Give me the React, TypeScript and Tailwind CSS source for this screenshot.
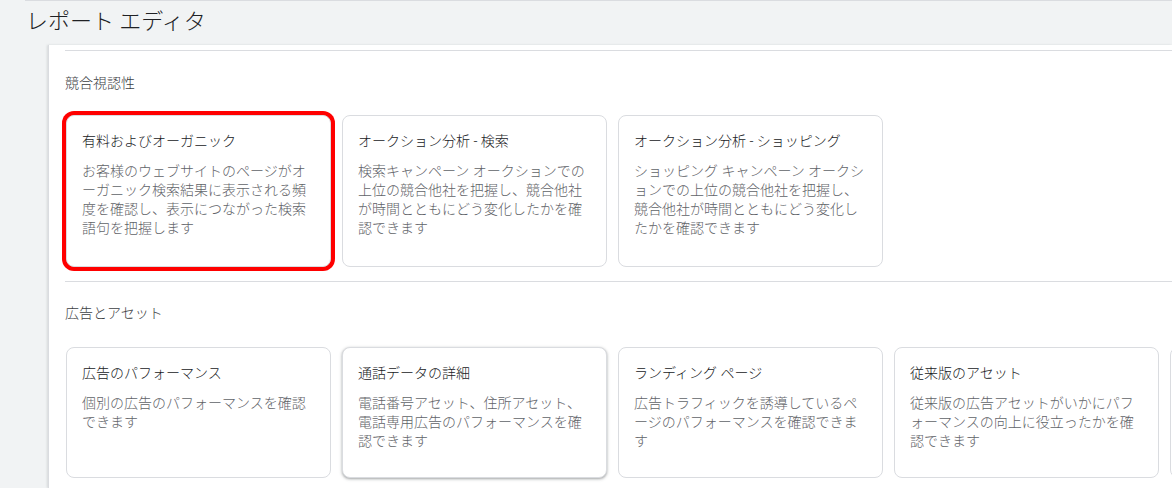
import React from "react";

type Card = { title: string; lines: string[]; shadow?: boolean; selected?: boolean };

const row1: Card[] = [
  {
    title: "有料およびオーガニック",
    lines: ["お客様のウェブサイトのページがオ", "ーガニック検索結果に表示される頻", "度を確認し、表示につながった検索", "語句を把握します"],
    selected: true,
  },
  {
    title: "オークション分析 - 検索",
    lines: ["検索キャンペーン オークションでの", "上位の競合他社を把握し、競合他社", "が時間とともにどう変化したかを確", "認できます"],
  },
  {
    title: "オークション分析 - ショッピング",
    lines: ["ショッピング キャンペーン オークシ", "ョンでの上位の競合他社を把握し、", "競合他社が時間とともにどう変化し", "たかを確認できます"],
  },
];

const row2: Card[] = [
  { title: "広告のパフォーマンス", lines: ["個別の広告のパフォーマンスを確認", "できます"] },
  {
    title: "通話データの詳細",
    lines: ["電話番号アセット、住所アセット、", "電話専用広告のパフォーマンスを確", "認できます"],
    shadow: true,
  },
  { title: "ランディング ページ", lines: ["広告トラフィックを誘導しているペ", "ージのパフォーマンスを確認できま", "す"] },
  { title: "従来版のアセット", lines: ["従来版の広告アセットがいかにパフ", "ォーマンスの向上に役立ったかを確", "認できます"] },
  { title: "", lines: [] },
];

function CardView({ c, h }: { c: Card; h: string }) {
  return (
    <div
      className={
        "shrink-0 w-[265px] rounded-[8px] border border-[#dadce0] bg-white px-[15px] pt-[15px] " +
        h +
        (c.selected ? " ring-4 ring-[#ff0000]" : "") +
        (c.shadow
          ? " shadow-[0_1px_3px_1px_rgba(60,64,67,0.15),0_1px_2px_0_rgba(60,64,67,0.3)]"
          : "")
      }
    >
      <div className="text-[14px] leading-[20px] font-light text-[#202124] whitespace-nowrap">{c.title}</div>
      <div className="mt-[11px] text-[14px] leading-[19px] font-light text-[#5f6368]">
        {c.lines.map((l, i) => (
          <div key={i} className="whitespace-nowrap">
            {l}
          </div>
        ))}
      </div>
    </div>
  );
}

export default function App() {
  return (
    <div
      className="w-[1172px] h-[488px] overflow-hidden bg-[#f1f3f4] flex flex-col"
      style={{ fontFamily: 'Roboto, "Noto Sans CJK JP", sans-serif' }}
    >
      <div className="h-[45px] shrink-0 pl-[25px]">
        <div className="h-px bg-[#dadce0]" />
        <div className="pl-[1px] pt-[6px] text-[22px] leading-[30px] font-light text-[#202124]">レポート エディタ</div>
      </div>
      <div className="flex-1 ml-[48px] bg-white border-l border-[#dadce0] shadow-[-1px_0_2px_rgba(60,64,67,0.15)] pl-[16px] overflow-hidden">
        <div className="mt-[5px] border-t border-[#dadce0]">
          <div className="pt-[22px] text-[14px] leading-[20px] font-light text-[#3c4043]">競合視認性</div>
          <div className="mt-[22px] pl-[1px] flex gap-[11px]">
            {row1.map((c, i) => (
              <CardView key={i} c={c} h="h-[152px]" />
            ))}
          </div>
        </div>
        <div className="mt-[14px] border-t border-[#dadce0]">
          <div className="pt-[21px] text-[14px] leading-[20px] font-light text-[#3c4043]">広告とアセット</div>
          <div className="mt-[24px] pl-[1px] flex gap-[11px]">
            {row2.map((c, i) => (
              <CardView key={i} c={c} h="h-[131px]" />
            ))}
          </div>
        </div>
      </div>
    </div>
  );
}
